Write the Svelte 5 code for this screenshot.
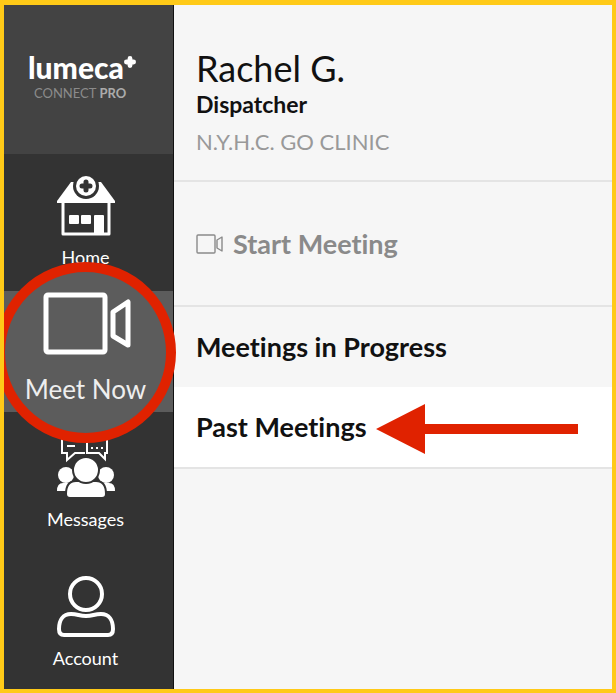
<script>
    let active = $state('meet');
    let section = $state('past');

    // Sections listed under the start button
    const sections = [
        { id: 'progress', label: 'Meetings in Progress' },
        { id: 'past', label: 'Past Meetings' }
    ];
</script>

<div class="app">
    <aside>
        <div class="brand">
            <div class="wordmark">
                <span>lumeca</span>
                <svg width="12" height="12" viewBox="0 0 10 10" aria-hidden="true">
                    <path d="M5 2v6M2 5h6" stroke="#fff" stroke-width="4" stroke-linecap="round" />
                </svg>
            </div>
            <div class="product">CONNECT <b>PRO</b></div>
        </div>

        <nav>
            <button class="item" onclick={() => (active = 'home')}>
                <svg width="60" height="62" viewBox="0 0 60 62" aria-hidden="true">
                    <path d="M15 6h30l14 19v2H1v-2z" fill="#fff" />
                    <path d="M7 26v32h46V26" fill="none" stroke="#fff" stroke-width="3" stroke-linejoin="round" />
                    <circle cx="30" cy="10" r="13" fill="#333" />
                    <circle cx="30" cy="10" r="10" fill="#fff" />
                    <path d="M30 6v8M26 10h8" stroke="#333" stroke-width="5" stroke-linecap="round" />
                    <rect x="13" y="39" width="10" height="9" rx="1" fill="#fff" />
                    <rect x="25" y="39" width="10" height="9" rx="1" fill="#fff" />
                    <path d="M38 59V40q0-1 1-1h8q1 0 1 1v19z" fill="#fff" />
                </svg>
                <span>Home</span>
            </button>

            <button class="meet" class:active={active === 'meet'} onclick={() => (active = 'meet')}>
                <span class="lens">
                    <svg width="90" height="64" viewBox="0 0 90 64" fill="none" stroke="#fff" stroke-width="5" stroke-linejoin="round" aria-hidden="true">
                        <rect x="5" y="3" width="59" height="57" rx="2" />
                        <path d="M72 20L87 10v43L72 44z" />
                    </svg>
                    <span>Meet Now</span>
                </span>
            </button>

            <button class="item" onclick={() => (active = 'messages')}>
                <svg width="60" height="66" viewBox="0 0 60 66" aria-hidden="true">
                    <g fill="none" stroke="#fff" stroke-width="2">
                        <path d="M6 1v18h5v7l8-7h10M11 12h8" />
                        <path d="M31 1v18h12l6 6v-6h2V1z" />
                    </g>
                    <path d="M35 14h2M40 14h2M45 14h2" stroke="#fff" stroke-width="2" />
                    <g fill="#fff">
                        <circle cx="10" cy="41" r="8" />
                        <circle cx="50" cy="41" r="8" />
                        <path d="M1 57q0-8 6-8h13v8H1zM59 57q0-8-6-8H40v8h19z" />
                    </g>
                    <g fill="#fff" stroke="#333" stroke-width="2">
                        <path d="M10 60q0-13 10-13h20q10 0 10 13 0 4-4 4H14q-4 0-4-4z" />
                        <circle cx="30" cy="36" r="13" />
                    </g>
                </svg>
                <span>Messages</span>
            </button>

            <button class="item" onclick={() => (active = 'account')}>
                <svg width="60" height="64" viewBox="0 0 60 64" fill="none" stroke="#fff" stroke-width="4" aria-hidden="true">
                    <circle cx="30" cy="19" r="16" />
                    <path d="M3 54C3 45 7 39 15 39c7 0 8 2 15 2s8-2 15-2c8 0 12 6 12 15q0 6-5 6H8q-5 0-5-6z" />
                </svg>
                <span>Account</span>
            </button>
        </nav>
    </aside>

    <main>
        <header>
            <h1>Rachel G.</h1>
            <p class="role">Dispatcher</p>
            <p class="clinic">N.Y.H.C. GO CLINIC</p>
        </header>

        <button class="start">
            <svg width="27" height="20" viewBox="0 0 27 20" fill="none" stroke="#8a8a8a" stroke-width="1.4" stroke-linejoin="round" aria-hidden="true">
                <rect x="1" y="1" width="18" height="18" rx="1" />
                <path d="M21 6l5-3v14l-5-3z" />
            </svg>
            Start Meeting
        </button>

        {#each sections as { id, label }}
            <button class="row" class:selected={section === id} onclick={() => (section = id)}>
                {label}
                {#if section === id}
                    <svg class="arrow" width="202" height="50" viewBox="0 0 202 50" fill="#e02200" aria-hidden="true">
                        <path d="M0 25L49 0v20h153v10H49v20z" />
                    </svg>
                {/if}
            </button>
        {/each}
    </main>
</div>

<style>
    :global(body) {
        margin: 0;
    }

    .app {
        box-sizing: border-box;
        display: flex;
        min-height: 100vh;
        overflow: hidden;
        border: 4px solid #ffca18;
        border-top-width: 5px;
        background: #f6f6f6;
        color: #111;
        font-family: Lato, "Open Sans", sans-serif;
        font-variant-ligatures: none;
    }

    button {
        border: 0;
        background: none;
        color: inherit;
        font: inherit;
        font-variant-ligatures: inherit;
        cursor: pointer;
    }

    svg {
        display: block;
        flex: none;
    }

    aside {
        flex: none;
        box-sizing: border-box;
        width: 170px;
        border-right: 1px solid #111;
        background: #333;
        color: #fff;
        position: relative;
        z-index: 1;
    }

    .brand {
        box-sizing: border-box;
        height: 149px;
        padding: 44px 0 0 24px;
        background: #434343;
    }

    .wordmark {
        display: flex;
        align-items: flex-start;
        font-size: 30px;
        font-weight: 900;
        line-height: 36px;
    }

    .wordmark svg {
        margin-top: 7px;
    }

    .product {
        padding-left: 6px;
        color: #8b8b8b;
        font-size: 13px;
        line-height: 16px;
    }

    .product b {
        color: #ababab;
    }

    .item {
        display: flex;
        flex-direction: column;
        align-items: center;
        gap: 8px;
        width: 100%;
        padding: 22px 6px 23px 0;
        font-size: 18px;
        line-height: 22px;
    }

    .item:last-child {
        padding-bottom: 18px;
    }

    .meet {
        position: relative;
        display: block;
        width: 100%;
        height: 121px;
        padding: 0;
    }

    .meet.active {
        background: #5c5c5c;
    }

    .lens {
        position: absolute;
        top: -29px;
        left: -9px;
        box-sizing: border-box;
        display: flex;
        flex-direction: column;
        align-items: center;
        gap: 16px;
        width: 181px;
        height: 181px;
        padding-top: 20px;
        border: 10px solid #e02200;
        border-radius: 50%;
        background: #5c5c5c;
        color: #eee;
        font-size: 26px;
        line-height: 34px;
    }

    main {
        flex: 1;
        min-width: 0;
    }

    header {
        padding: 41px 22px 24px;
        border-bottom: 2px solid #e4e4e4;
    }

    h1,
    p {
        margin: 0;
    }

    h1 {
        font-size: 36px;
        font-weight: 400;
        line-height: 44px;
    }

    .role {
        font-size: 23px;
        font-weight: 700;
        line-height: 28px;
    }

    .clinic {
        margin-top: 10px;
        color: #999;
        font-size: 22px;
        line-height: 28px;
    }

    .start {
        display: flex;
        align-items: center;
        gap: 10px;
        width: 100%;
        padding: 45px 22px 44px;
        border-bottom: 2px solid #e4e4e4;
        color: #8a8a8a;
        font-size: 27px;
        font-weight: 700;
        line-height: 34px;
    }

    .row {
        position: relative;
        display: block;
        width: 100%;
        padding: 23px 22px;
        font-size: 27px;
        font-weight: 700;
        line-height: 34px;
        text-align: left;
    }

    .row.selected {
        border-bottom: 2px solid #e4e4e4;
        background: #fff;
    }

    .arrow {
        position: absolute;
        top: 17px;
        right: 34px;
    }
</style>
